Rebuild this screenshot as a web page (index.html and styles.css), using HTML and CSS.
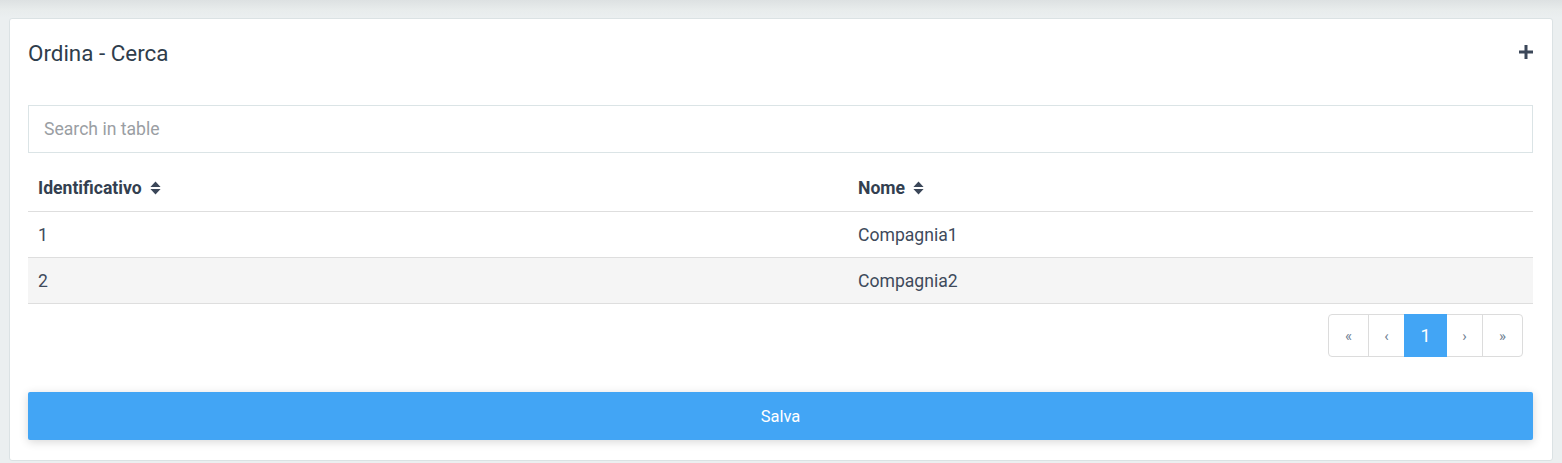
FILE: index.html
```html
<!DOCTYPE html>
<html>
<head>
<meta charset="utf-8">
<link rel="stylesheet" href="styles.css">
</head>
<body>
<div class="page">
  <div class="card">
    <div class="card-head">
      <h4 class="title">Ordina - Cerca</h4>
      <svg class="plus" width="14" height="14" viewBox="0 0 14 14"><path d="M5.5 0h3v5.5H14v3H8.5V14h-3V8.5H0v-3h5.5z" fill="#3b4759"/></svg>
    </div>
    <input class="search" type="text" placeholder="Search in table">
    <table class="tbl">
      <colgroup><col class="c1"><col></colgroup>
      <thead>
        <tr>
          <th>Identificativo <svg class="sort" width="11" height="14" viewBox="0 0 11 14"><path d="M5.5 0.5L10.6 5.9H0.4z M5.5 13.5L10.6 8.1H0.4z" fill="#3b4759"/></svg></th>
          <th>Nome <svg class="sort" width="11" height="14" viewBox="0 0 11 14"><path d="M5.5 0.5L10.6 5.9H0.4z M5.5 13.5L10.6 8.1H0.4z" fill="#3b4759"/></svg></th>
        </tr>
      </thead>
      <tbody>
        <tr><td>1</td><td>Compagnia1</td></tr>
        <tr class="alt"><td>2</td><td>Compagnia2</td></tr>
      </tbody>
    </table>
    <div class="pager-row">
      <ul class="pager">
        <li class="pg w40">«</li>
        <li class="pg w36">‹</li>
        <li class="pg active w43">1</li>
        <li class="pg w35">›</li>
        <li class="pg w41">»</li>
      </ul>
    </div>
    <button class="save">Salva</button>
  </div>
</div>
</body>
</html>
```

FILE: styles.css
```css
* { box-sizing: border-box; }
html, body { margin: 0; padding: 0; }
body {
  width: 1562px;
  height: 463px;
  overflow: hidden;
  font-family: Roboto, "Liberation Sans", sans-serif;
  background: linear-gradient(to bottom, #dde1e2 0px, #e8ecec 10px, #ebeff0 18px, #ebeff0 100%);
  color: #3e4a5b;
}
.page {
  padding: 18px 9px 0 9px;
}
.card {
  background: #fff;
  border: 1px solid #dbe2e4;
  border-radius: 3px;
  padding: 18px 19px 19px 18px;
  height: 443px;
}
.card-head {
  display: flex;
  justify-content: space-between;
  align-items: center;
  height: 32px;
}
.title {
  margin: 0;
  font-size: 22.4px;
  font-weight: 400;
  line-height: 32px;
  color: #2f3d4c;
}
.plus { display: block; margin-right: 0; margin-top: -2px; }
.search {
  display: block;
  width: 100%;
  height: 48px;
  margin-top: 36px;
  border: 1px solid #dbe4e6;
  border-radius: 0;
  padding: 0 15px;
  font-family: Roboto, "Liberation Sans", sans-serif;
  font-size: 17.6px;
  color: #3e4a5b;
  outline: none;
}
.search::placeholder { color: #9a9ea3; }
.tbl {
  width: 100%;
  border-collapse: collapse;
  table-layout: fixed;
  margin-top: 0;
  font-size: 17.6px;
}
.c1 { width: 820px; }
.tbl th {
  text-align: left;
  font-weight: 700;
  color: #333f50;
  padding: 23px 10px 11px 10px;
  line-height: 24px;
  border-bottom: 1px solid #dedede;
}
.tbl td {
  padding: 11px 10px 10px 10px;
  line-height: 24px;
  border-bottom: 1px solid #dedede;
  color: #3e4a5b;
}
.tbl tr.alt td { background: #f5f5f5; }
.sort { vertical-align: -1px; margin-left: 4px; }
.pager-row {
  display: flex;
  justify-content: flex-end;
  padding: 10px 10px 0 0;
}
.pager {
  display: flex;
  list-style: none;
  margin: 0;
  padding: 0;
  border: 1px solid #dcdcdc;
  border-radius: 4px;
  height: 43px;
}
.pg {
  display: flex;
  align-items: center;
  justify-content: center;
  font-size: 15px;
  color: #6f7f93;
  border-left: 1px solid #dcdcdc;
  height: 41px;
}
.pg:first-child { border-left: none; }
.w40 { width: 39px; }
.w36 { width: 36px; }
.w43 { width: 43px; }
.w35 { width: 35px; }
.w41 { width: 40px; }
.pg.active {
  background: #42a5f5;
  color: #fff;
  font-size: 18px;
  border-left: none;
  height: 43px;
  margin-top: -1px;
}
.pg.active + .pg { border-left: none; }
.save {
  display: block;
  width: 100%;
  height: 48px;
  margin-top: 35px;
  border: none;
  border-radius: 2px;
  background: #42a5f5;
  color: #fff;
  font-family: Roboto, "Liberation Sans", sans-serif;
  font-size: 16.5px;
  box-shadow: 0 2px 10px rgba(0,0,0,0.16);
}
```
